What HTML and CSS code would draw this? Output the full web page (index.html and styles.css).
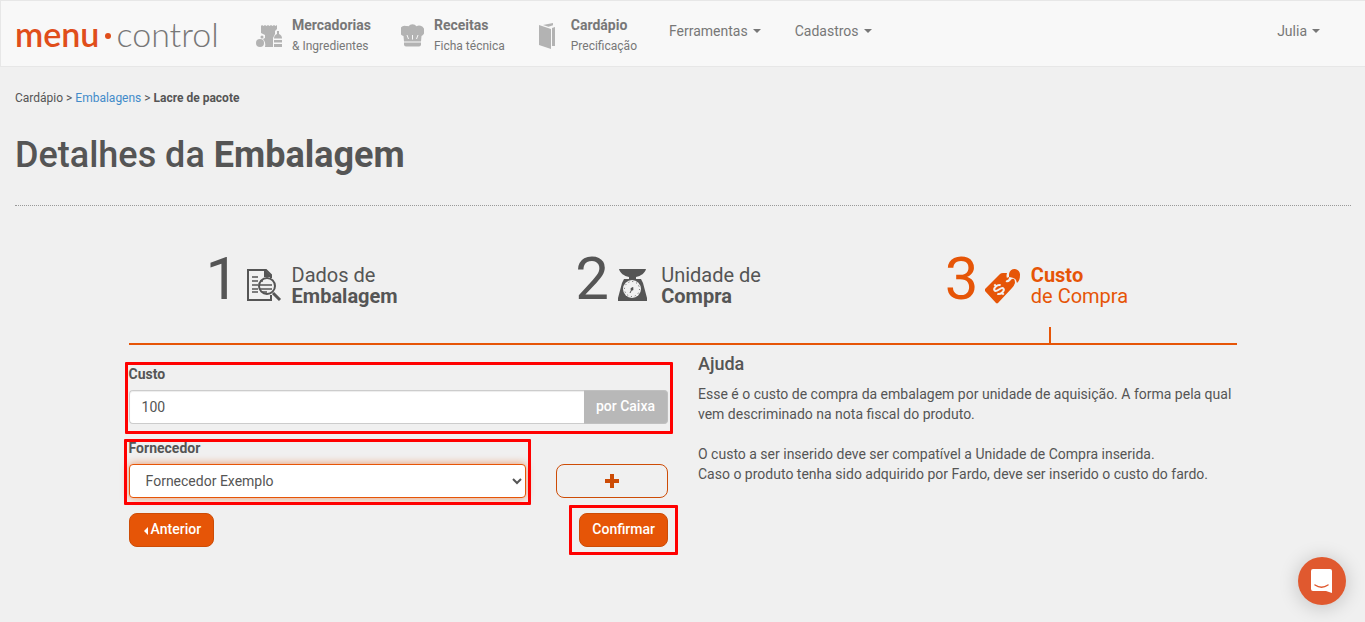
FILE: index.html
```html
<!DOCTYPE html>
<html lang="pt-BR">
<head>
    <meta charset="UTF-8">
    <meta name="viewport" content="width=device-width, initial-scale=1.0">
    <title>Menu Control - Detalhes da Embalagem</title>
    <link rel="stylesheet" href="styles.css">
</head>
<body>
    <nav class="navbar">
        <a class="brand" href="#"><span class="brand-menu">menu</span><span class="brand-dot"></span><span class="brand-control">control</span></a>
        <a class="nav-item" href="#">
            <svg class="nav-icon" width="26" height="24" viewBox="0 0 26 24">
                <path d="M5 2l1-1 1.500 1L9 1l1.500 1L12 1l1.500 1L15 1l1.500 1L18 1l1.500 1L21 1v4l-2 2v3l-2 4v9H9q1-5-2-8l2-1V11L5 9z"/>
                <circle cx="4" cy="19" r="4"/>
                <circle cx="6" cy="13" r="1.500"/>
                <path d="M21 7h2v3c2 1 3 2 3 4.500h-8c0-2.500 1-3.500 3-4.500zM18 16h8v2.500h-8zM18 20h8v3h-8z"/>
            </svg>
            <span class="nav-text"><strong>Mercadorias</strong><small>&amp; Ingredientes</small></span>
        </a>
        <a class="nav-item" href="#">
            <svg class="nav-icon" width="23" height="24" viewBox="0 0 23 24">
                <path d="M3 17.500L2.500 12A5 5 0 0 1 5 2q1.500-.3 2.500.2a5 5 0 0 1 8 0A5 5 0 0 1 20.500 12L20 17.500z"/>
                <path d="M3 18.500h17v2q0 2-2 2H5q-2 0-2-2z"/>
                <path class="icon-cut" d="M6 11l1.500 4M11.500 11v4.500M17 11l-1.500 4"/>
            </svg>
            <span class="nav-text"><strong>Receitas</strong><small>Ficha técnica</small></span>
        </a>
        <a class="nav-item" href="#">
            <svg class="nav-icon" width="26" height="26" viewBox="0 0 26 26">
                <path d="M4 2l12 4v20L4 22zM8 2L18 0v2.200l-4.500 1.600zM17 5l3-1v19h-3z"/>
            </svg>
            <span class="nav-text"><strong>Cardápio</strong><small>Precificação</small></span>
        </a>
        <button class="nav-toggle" type="button">Ferramentas <span class="caret"></span></button>
        <button class="nav-toggle" type="button">Cadastros <span class="caret"></span></button>
        <button class="nav-toggle nav-user" type="button">Julia <span class="caret"></span></button>
    </nav>

    <main class="page">
        <div class="breadcrumb">Cardápio &gt; <a href="#">Embalagens</a> &gt; <strong>Lacre de pacote</strong></div>
        <h1>Detalhes da <strong>Embalagem</strong></h1>

        <section class="wizard">
            <ol class="steps">
                <li class="step">
                    <span class="step-number">1</span>
                    <svg class="step-icon" width="36" height="36" viewBox="0 0 36 36" fill="none" stroke="currentColor" stroke-width="2">
                        <path d="M25 27v5H2V2h18l5 5v3"/>
                        <path d="M19 2v6h6" fill="currentColor"/>
                        <path d="M6 9h6M6 13h6M6 17h6M6 21h6M6 24h6M14 13h3M14 17h12M14 21h12M16 24h5" stroke-width="1.500"/>
                        <circle cx="21" cy="18" r="8"/>
                        <path d="M27 25l7 7" stroke-width="3"/>
                    </svg>
                    <span class="step-text">Dados de<br><strong>Embalagem</strong></span>
                </li>
                <li class="step">
                    <span class="step-number">2</span>
                    <svg class="step-icon" width="36" height="36" viewBox="0 0 36 36">
                        <path fill="currentColor" d="M4 1h27c-1 4-5 7-10 8v2h5l2 4 4 15v3H3v-3l4-15 2-4h5V9C9 8 5 5 4 1z"/>
                        <circle cx="17" cy="21" r="9" fill="#f0f0f0"/>
                        <circle cx="17" cy="21" r="7.500" fill="none" stroke="currentColor" stroke-width="1" stroke-dasharray="1 2.930"/>
                        <path d="M15 25l3-6" stroke="currentColor" stroke-width="1"/>
                        <circle cx="17" cy="21" r="1.500" fill="currentColor"/>
                    </svg>
                    <span class="step-text">Unidade de<br><strong>Compra</strong></span>
                </li>
                <li class="step active">
                    <span class="step-number">3</span>
                    <svg class="step-icon" width="36" height="38" viewBox="2 0 36 38">
                        <path fill="currentColor" d="M2 24q-1-1 0-2L17 7q1-1 3-1h4q-1 3 0 5 1-1 2-1 0 3-2 3-2 1-1 2 2 1 4-1 2-3 4-2 1 1 1 4-1 3-3 5L15 36q-1 .8-2 0z"/>
                        <path fill="currentColor" d="M26 7a5.500 5.500 0 1 1 11 1c0 4-1 6-3 8l-1-3c-2-3-5-2-7-3z"/>
                        <g transform="translate(16 22.500) rotate(-42)" fill="none" stroke="#f0f0f0" stroke-width="2">
                            <path d="M4-2C3-5-4-5-4-2S4-1 4 2-3 5-4 2M0-7v3M0 4v3"/>
                        </g>
                    </svg>
                    <span class="step-text"><strong>Custo</strong><br>de Compra</span>
                </li>
            </ol>

            <div class="columns">
                <form class="form">
                    <div class="form-group mark mark-cost">
                        <label for="custo">Custo</label>
                        <div class="input-group">
                            <input class="form-control" id="custo" type="text" value="100">
                            <span class="addon">por Caixa</span>
                        </div>
                    </div>
                    <div class="supplier-row">
                        <div class="form-group mark mark-supplier">
                            <label for="fornecedor">Fornecedor</label>
                            <select class="form-control is-focused" id="fornecedor">
                                <option>Fornecedor Exemplo</option>
                            </select>
                        </div>
                        <button class="btn btn-outline" type="button" aria-label="Adicionar fornecedor">
                            <svg width="14" height="14" viewBox="0 0 14 14"><path fill="currentColor" d="M5 0h4v5h5v4H9v5H5V9H0V5h5z"/></svg>
                        </button>
                    </div>
                    <div class="actions">
                        <button class="btn btn-primary" type="button"><span class="arrow-left"></span>Anterior</button>
                        <div class="mark mark-confirm">
                            <button class="btn btn-primary" type="button">Confirmar</button>
                        </div>
                    </div>
                </form>

                <aside class="help">
                    <h2>Ajuda</h2>
                    <p>Esse é o custo de compra da embalagem por unidade de aquisição. A forma pela qual vem descriminado na nota fiscal do produto.</p>
                    <p>O custo a ser inserido deve ser compatível a Unidade de Compra inserida.<br>Caso o produto tenha sido adquirido por Fardo, deve ser inserido o custo do fardo.</p>
                </aside>
            </div>
        </section>
    </main>

    <button class="chat" type="button" aria-label="Abrir chat">
        <svg width="24" height="26" viewBox="0 0 24 26">
            <path fill="#fff" d="M3 1h17q2 0 2 2v22l-6-2H3q-2 0-2-2V3q0-2 2-2z"/>
            <path fill="none" stroke="#e0592f" stroke-width="1.500" stroke-linecap="round" d="M5 17q6.500 4.500 13 0"/>
        </svg>
    </button>
</body>
</html>
```

FILE: styles.css
```css
* {
    box-sizing: border-box;
}

body {
    margin: 0;
    min-height: 100vh;
    font-family: Roboto, Arial, sans-serif;
    font-size: 14px;
    line-height: 20px;
    color: #555;
    background-color: #f0f0f0;
}

a {
    color: #428bca;
    text-decoration: none;
}

button,
input,
select {
    font-family: inherit;
    font-size: 14px;
    line-height: 20px;
}

/* Navbar */
.navbar {
    display: flex;
    align-items: flex-start;
    min-height: 67px;
    padding: 14px 45px 8px 14px;
    background-color: #f8f8f8;
    border: 1px solid #e7e7e7;
    border-right: 0;
}

.brand {
    display: flex;
    align-items: center;
    width: 241px;
    height: 38px;
    font-family: Lato, sans-serif;
    font-size: 34px;
    line-height: 38px;
}

.brand-menu {
    font-weight: 600;
    color: #e04e1b;
}

.brand-dot {
    width: 6px;
    height: 6px;
    margin: 4px 5px 0 6px;
    border-radius: 50%;
    background-color: #e04e1b;
}

.brand-control {
    font-weight: 300;
    color: #777;
}

.nav-item {
    display: flex;
    align-items: center;
    gap: 10px;
    margin-right: 30px;
    color: #777;
}

.nav-icon {
    fill: #b3b3b3;
}

.icon-cut {
    stroke: #f8f8f8;
}

.nav-text strong,
.nav-text small {
    display: block;
}

.nav-text small {
    font-size: 12px;
    line-height: 22px;
}

.nav-toggle {
    display: flex;
    align-items: center;
    gap: 5px;
    margin: 6px 34px 0 0;
    padding: 0;
    color: #777;
    background: none;
    border: 0;
    cursor: pointer;
}

.nav-item + .nav-toggle {
    margin-left: 2px;
}

.nav-user {
    margin-right: 0;
    margin-left: auto;
}

.caret {
    border: 4px solid transparent;
    border-top-color: #777;
    border-bottom: 0;
}

/* Page */
.page {
    padding: 21px 14px 20px 15px;
}

.breadcrumb {
    font-size: 12px;
}

h1 {
    margin: 27px 0 30px;
    padding-bottom: 30px;
    border-bottom: 1px dotted #999;
    font-size: 36px;
    font-weight: 500;
    line-height: 40px;
}

.wizard {
    width: 83%;
    margin: 0 auto;
}

.steps {
    display: grid;
    grid-template-columns: repeat(3, 1fr);
    margin: 0 0 19px;
    padding: 0;
    list-style: none;
    border-bottom: 2px solid #e65507;
}

.step {
    position: relative;
    display: flex;
    align-items: center;
    height: 107px;
    padding: 0 0 21px 77px;
}

.step-number {
    width: 36px;
    font-size: 60px;
    line-height: 60px;
}

.step-icon {
    margin: 14px 10px 0 4px;
}

.step-text {
    margin-top: 14px;
    font-size: 20px;
    line-height: 21px;
}

.step.active {
    color: #e65507;
}

.step.active::after {
    content: "";
    position: absolute;
    bottom: 0;
    left: 49%;
    width: 2px;
    height: 16px;
    background-color: #e65507;
}

.columns {
    display: grid;
    grid-template-columns: 1fr 1fr;
    gap: 30px;
}

/* Form */
.form-group {
    margin-bottom: 14px;
}

label {
    display: block;
    margin-bottom: 6px;
    font-weight: 700;
}

.form-control {
    width: 100%;
    height: 34px;
    padding: 6px 12px;
    color: #555;
    background-color: #fff;
    border: 1px solid #ccc;
    border-radius: 4px;
    box-shadow: inset 0 1px 1px rgba(0, 0, 0, 0.075);
}

.is-focused {
    border-color: #e65507;
    outline: 0;
    box-shadow: 0 0 8px rgba(230, 85, 7, 0.6);
}

.input-group {
    display: flex;
}

.input-group .form-control {
    flex: 1;
    border-right: 0;
    border-radius: 4px 0 0 4px;
}

.addon {
    padding: 5px 12px 7px;
    font-weight: 500;
    color: #fff;
    background-color: #b8b8b8;
    border: 1px solid #c0c0c0;
    border-left: 0;
    border-radius: 0 4px 4px 0;
}

.supplier-row {
    display: grid;
    grid-template-columns: 1fr 112px;
    align-items: end;
    gap: 30px;
    margin-bottom: 15px;
}

.supplier-row .form-group {
    margin-bottom: 0;
}

.btn {
    height: 34px;
    padding: 5px 12px 7px;
    font-weight: 500;
    border: 1px solid #cd4c06;
    border-radius: 8px;
    cursor: pointer;
}

.btn-primary {
    display: flex;
    align-items: center;
    color: #fff;
    background-color: #e65507;
}

.btn-outline {
    color: #cd4c06;
    background-color: transparent;
}

.btn-outline svg {
    vertical-align: middle;
}

.arrow-left {
    margin: 4px 3px 0 2px;
    border: 4px solid transparent;
    border-right-color: #fff;
    border-left: 0;
}

.actions {
    display: flex;
    justify-content: space-between;
}

/* Red frames around the fields to fill in */
.mark {
    position: relative;
}

.mark::after {
    content: "";
    position: absolute;
    border: 3px solid #f00;
    border-radius: 1px;
    pointer-events: none;
}

.mark-cost::after {
    inset: -2px -5px -10px -4px;
}

.mark-supplier::after {
    inset: 1px -5px -7px -5px;
}

.mark-confirm::after {
    inset: -8px -10px;
}

/* Help */
.help h2 {
    margin: -10px 0 10px;
    font-size: 18px;
    font-weight: 500;
    line-height: 20px;
}

.help p {
    margin: 0 0 20px;
}

/* Chat launcher */
.chat {
    position: fixed;
    right: 19px;
    bottom: 17px;
    display: flex;
    align-items: center;
    justify-content: center;
    width: 48px;
    height: 48px;
    padding: 0;
    background-color: #e0592f;
    border: 0;
    border-radius: 50%;
    box-shadow: 0 2px 20px rgba(0, 0, 0, 0.2);
    cursor: pointer;
}
```
